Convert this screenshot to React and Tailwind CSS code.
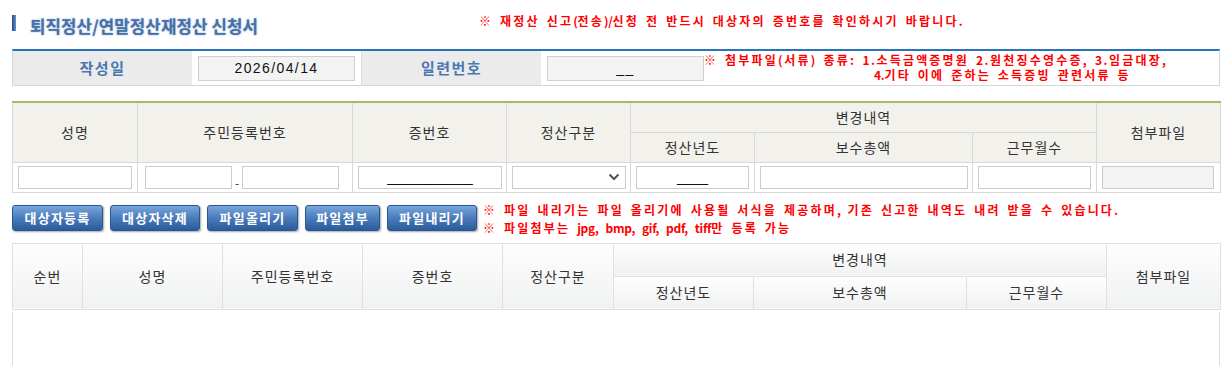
const redNote = "text-[12px] font-bold text-[#ff0000] tracking-[2.2px] [word-spacing:2px]";

// Hangul runs keep the wide tracking, latin/punctuation runs get tightened
function Red({ text, latin = "tracking-[-0.3px]" }) {
  const parts = text.split(/([^\uAC00-\uD7A3※ ]+)/);
  return (
    <>
      {parts.map((p, i) =>
        i % 2 === 1 ? (
          <span key={i} className={latin}>{p}</span>
        ) : (
          <span key={i}>{p}</span>
        )
      )}
    </>
  );
}

function TopInput({ value, underline }) {
  return (
    <div
      className={
        "w-[157px] h-[25px] bg-[#f3f3f3] border border-[#cfcfcf] flex justify-center font-['Liberation_Sans',sans-serif] text-[14px] text-[#111] tracking-[1.4px] " +
        (underline ? "items-end pb-[1px]" : "items-center")
      }
    >
      {value}
    </div>
  );
}

function Box({ className = "", bg = "bg-white", children }) {
  return (
    <div
      className={
        "h-[23px] border border-[#cccccc] flex items-center justify-center font-['Liberation_Sans',sans-serif] text-[14px] text-[#111] " +
        bg + " " + className
      }
    >
      {children}
    </div>
  );
}

function BlueButton({ label, w }) {
  return (
    <button
      className={
        "h-[26px] rounded-[3px] border border-[#2b5690] bg-gradient-to-b from-[#79a5da] via-[#4a7cbc] to-[#2a5c9c] text-white text-[13px] font-bold tracking-[1.2px] shadow-[1px_1px_2px_rgba(0,0,0,0.35)] flex items-center justify-center " +
        w
      }
    >
      {label}
    </button>
  );
}

export default function App() {
  const th = "border border-[#d8d8d8] bg-[#f2f1ec] text-[14px] font-normal text-[#333] tracking-[1px] align-middle";
  const th2 = "border border-[#e0e0e0] bg-gradient-to-b from-[#fefefe] to-[#f0f1f2] text-[14px] font-normal text-[#333] tracking-[1px] align-middle";
  const td = "border border-[#d8d8d8] bg-white px-[5px] align-middle";

  return (
    <div className="w-[1229px] h-[366px] overflow-hidden bg-white pl-[12px] pr-[9px] font-['Noto_Sans_CJK_KR',sans-serif]">
      {/* title row */}
      <div className="h-[49px] grid grid-cols-[467px_1fr]">
        <div className="flex items-center h-[16px] mt-[15px]">
          <div className="w-[4px] h-[16px] bg-gradient-to-r from-[#1d4b8a] to-[#6b92c8]" />
          <div className="ml-[14px] text-[16.8px] font-bold text-[#4670a6] tracking-[0.1px] leading-[16px] pt-[5px] whitespace-nowrap [text-shadow:0_0_2px_rgba(90,130,190,0.7)]">
            퇴직정산/연말정산재정산 신청서
          </div>
        </div>
        <div className={"mt-[14px] leading-[14px] " + redNote}>
          <Red text="※ 재정산 신고(전송)/신청 전 반드시 대상자의 증번호를 확인하시기 바랍니다." />
        </div>
      </div>

      {/* top info table */}
      <div className="flex h-[37px] border-t-2 border-[#2b73b9] border-b border-x border-b-[#d6d6d6] border-x-[#d6d6d6]">
        <div className="w-[179px] bg-[#ebebeb] flex items-center justify-center text-[15px] font-bold text-[#4a78b0] tracking-[1.5px]">
          작성일
        </div>
        <div className="w-[170px] flex items-center pl-[6px] border-r border-[#dcdcdc]">
          <TopInput value="2026/04/14" />
        </div>
        <div className="w-[179px] bg-[#ebebeb] flex items-center justify-center text-[15px] font-bold text-[#4a78b0] tracking-[1.5px]">
          일련번호
        </div>
        <div className="flex-1 flex items-center pl-[6px]">
          <TopInput value="__" underline />
          <div className={"self-start mt-[1px] leading-[15px] whitespace-nowrap " + redNote}>
            <div><Red text="※ 첨부파일(서류) 종류: 1.소득금액증명원 2.원천징수영수증, 3.임금대장," latin="tracking-[1.5px]" /></div>
            <div className="pl-[170px]"><Red text="4.기타 이에 준하는 소득증빙 관련서류 등" /></div>
          </div>
        </div>
      </div>

      {/* entry table */}
      <table className="mt-[15px] w-[1208px] table-fixed border-collapse border-t-2 border-t-[#a7ba6a]">
        <colgroup>
          <col className="w-[125px]" />
          <col className="w-[215px]" />
          <col className="w-[154px]" />
          <col className="w-[124px]" />
          <col className="w-[124px]" />
          <col className="w-[218px]" />
          <col className="w-[124px]" />
          <col className="w-[124px]" />
        </colgroup>
        <thead>
          <tr className="h-[30px]">
            <th rowSpan={2} className={th}>성명</th>
            <th rowSpan={2} className={th}>주민등록번호</th>
            <th rowSpan={2} className={th}>증번호</th>
            <th rowSpan={2} className={th}>정산구분</th>
            <th colSpan={3} className={th}>변경내역</th>
            <th rowSpan={2} className={th}>첨부파일</th>
          </tr>
          <tr className="h-[30px]">
            <th className={th}>정산년도</th>
            <th className={th}>보수총액</th>
            <th className={th}>근무월수</th>
          </tr>
        </thead>
        <tbody>
          <tr className="h-[30px]">
            <td className={td}><Box className="w-full" /></td>
            <td className={td + " pl-[7px]"}>
              <div className="flex items-end">
                <Box className="w-[87px]" />
                <span className="w-[10px] text-center text-[12px] leading-[12px] text-[#333]">-</span>
                <Box className="w-[97px]" />
              </div>
            </td>
            <td className={td}><Box className="w-[144px] items-end">___________</Box></td>
            <td className={td}>
              <Box className="w-[114px] justify-end pr-[5px]">
                <svg width="12" height="8" viewBox="0 0 12 8">
                  <path d="M1.5 1.5 L6 6 L10.5 1.5" fill="none" stroke="#555" strokeWidth="2" />
                </svg>
              </Box>
            </td>
            <td className={td}><Box className="w-[113px] items-end">____</Box></td>
            <td className={td}><Box className="w-[208px]" /></td>
            <td className={td}><Box className="w-[113px]" /></td>
            <td className={td}><Box className="w-[112px]" bg="bg-[#f3f3f3]" /></td>
          </tr>
        </tbody>
      </table>

      {/* buttons + notes */}
      <div className="mt-[8px] flex items-start">
        <div className="mt-[4px] flex gap-[7px]">
          <BlueButton label="대상자등록" w="w-[91px]" />
          <BlueButton label="대상자삭제" w="w-[90px]" />
          <BlueButton label="파일올리기" w="w-[91px]" />
          <BlueButton label="파일첨부" w="w-[75px]" />
          <BlueButton label="파일내리기" w="w-[90px]" />
        </div>
        <div className={"ml-[6px] leading-[18px] whitespace-nowrap " + redNote}>
          <div><Red text="※ 파일 내리기는 파일 올리기에 사용될 서식을 제공하며, 기존 신고한 내역도 내려 받을 수 있습니다." /></div>
          <div><Red text="※ 파일첨부는 jpg, bmp, gif, pdf, tiff만 등록 가능" /></div>
        </div>
      </div>

      {/* list table */}
      <table className="mt-[6px] w-[1208px] table-fixed border-collapse">
        <colgroup>
          <col className="w-[70px]" />
          <col className="w-[140px]" />
          <col className="w-[140px]" />
          <col className="w-[140px]" />
          <col className="w-[111px]" />
          <col className="w-[140px]" />
          <col className="w-[213px]" />
          <col className="w-[140px]" />
          <col className="w-[114px]" />
        </colgroup>
        <thead>
          <tr className="h-[33px]">
            <th rowSpan={2} className={th2}>순번</th>
            <th rowSpan={2} className={th2}>성명</th>
            <th rowSpan={2} className={th2}>주민등록번호</th>
            <th rowSpan={2} className={th2}>증번호</th>
            <th rowSpan={2} className={th2}>정산구분</th>
            <th colSpan={3} className={th2}>변경내역</th>
            <th rowSpan={2} className={th2}>첨부파일</th>
          </tr>
          <tr className="h-[33px]">
            <th className={th2}>정산년도</th>
            <th className={th2}>보수총액</th>
            <th className={th2}>근무월수</th>
          </tr>
        </thead>
      </table>
      <div className="mt-[2px] w-[1208px] h-[80px] border-x border-[#dcdcdc]" />
    </div>
  );
}
